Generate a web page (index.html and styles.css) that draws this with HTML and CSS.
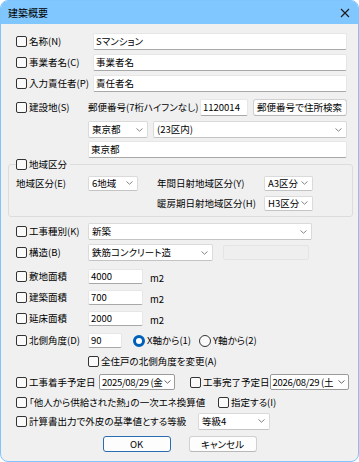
FILE: index.html
```html
<!DOCTYPE html>
<html lang="ja">
<head>
<meta charset="utf-8">
<link rel="stylesheet" href="styles.css">
</head>
<body>
<div class="win">
  <div class="titlebar">
    <span class="title">建築概要</span>
    <svg class="close" width="10" height="10" viewBox="0 0 10 10"><path d="M1 1L9 9M9 1L1 9" stroke="#1a1a1a" stroke-width="1.1"/></svg>
  </div>
  <div class="content">
    <div class="row">
      <label class="lbl w77"><span class="cb"></span>名称(N)</label>
      <div class="input grow">Sマンション</div>
    </div>
    <div class="row">
      <label class="lbl w77"><span class="cb"></span>事業者名(C)</label>
      <div class="input grow">事業者名</div>
    </div>
    <div class="row">
      <label class="lbl w77"><span class="cb"></span>入力責任者(P)</label>
      <div class="input grow">責任者名</div>
    </div>
    <div class="row h27">
      <label class="lbl w72"><span class="cb"></span>建設地(S)</label>
      <span class="zip-lbl">郵便番号(7桁ハイフンなし)</span>
      <div class="input zip">1120014</div>
      <div class="btn search">郵便番号で住所検索</div>
    </div>
    <div class="row h17">
      <span class="w72"></span>
      <div class="select pref"><span>東京都</span><svg class="chev" width="7" height="4" viewBox="0 0 7 4"><path d="M0.5 0.5L3.5 3.2L6.5 0.5" fill="none" stroke="#777" stroke-width="0.9"/></svg></div>
      <div class="select grow ml5"><span>(23区内)</span><svg class="chev" width="7" height="4" viewBox="0 0 7 4"><path d="M0.5 0.5L3.5 3.2L6.5 0.5" fill="none" stroke="#777" stroke-width="0.9"/></svg></div>
    </div>
    <div class="row h17 mt3">
      <span class="w72"></span>
      <div class="input grow">東京都</div>
    </div>

    <fieldset class="group">
      <legend class="lbl"><span class="cb"></span>地域区分</legend>
      <div class="grid">
        <span class="glbl">地域区分(E)</span>
        <div class="select s-area"><span>6地域</span><svg class="chev" width="7" height="4" viewBox="0 0 7 4"><path d="M0.5 0.5L3.5 3.2L6.5 0.5" fill="none" stroke="#777" stroke-width="0.9"/></svg></div>
        <span></span>
        <span class="glbl">年間日射地域区分(Y)</span>
        <div class="select s-zone"><span>A3区分</span><svg class="chev" width="7" height="4" viewBox="0 0 7 4"><path d="M0.5 0.5L3.5 3.2L6.5 0.5" fill="none" stroke="#777" stroke-width="0.9"/></svg></div>
        <span></span><span></span><span></span>
        <span class="glbl">暖房期日射地域区分(H)</span>
        <div class="select s-zone"><span>H3区分</span><svg class="chev" width="7" height="4" viewBox="0 0 7 4"><path d="M0.5 0.5L3.5 3.2L6.5 0.5" fill="none" stroke="#777" stroke-width="0.9"/></svg></div>
      </div>
    </fieldset>

    <div class="row mt4">
      <label class="lbl w72"><span class="cb"></span>工事種別(K)</label>
      <div class="select kind"><span>新築</span><svg class="chev" width="7" height="4" viewBox="0 0 7 4"><path d="M0.5 0.5L3.5 3.2L6.5 0.5" fill="none" stroke="#777" stroke-width="0.9"/></svg></div>
    </div>
    <div class="row">
      <label class="lbl w72"><span class="cb"></span>構造(B)</label>
      <div class="select struct"><span>鉄筋コンクリート造</span><svg class="chev" width="7" height="4" viewBox="0 0 7 4"><path d="M0.5 0.5L3.5 3.2L6.5 0.5" fill="none" stroke="#777" stroke-width="0.9"/></svg></div>
      <div class="disabled"></div>
    </div>
    <div class="row mt3">
      <label class="lbl w72"><span class="cb"></span>敷地面積</label>
      <div class="input area">4000</div><span class="unit">m2</span>
    </div>
    <div class="row">
      <label class="lbl w72"><span class="cb"></span>建築面積</label>
      <div class="input area">700</div><span class="unit">m2</span>
    </div>
    <div class="row">
      <label class="lbl w72"><span class="cb"></span>延床面積</label>
      <div class="input area">2000</div><span class="unit">m2</span>
    </div>
    <div class="row mt1">
      <label class="lbl w72"><span class="cb"></span>北側角度(D)</label>
      <div class="input angle">90</div>
      <label class="lbl radio-x"><span class="rb on"></span>X軸から(1)</label>
      <label class="lbl radio-y"><span class="rb"></span>Y軸から(2)</label>
    </div>
    <div class="row h20">
      <span class="w72"></span>
      <label class="lbl"><span class="cb"></span>全住戸の北側角度を変更(A)</label>
    </div>
    <div class="row h22">
      <label class="lbl w83"><span class="cb"></span>工事着手予定日</label>
      <div class="date d1"><span>2025/08/29 (金</span><svg class="chev" width="7" height="4" viewBox="0 0 7 4"><path d="M0.5 0.5L3.5 3.2L6.5 0.5" fill="none" stroke="#555" stroke-width="0.9"/></svg></div>
      <label class="lbl done"><span class="cb"></span>工事完了予定日</label>
      <div class="date d2"><span>2026/08/29 (土</span><svg class="chev" width="7" height="4" viewBox="0 0 7 4"><path d="M0.5 0.5L3.5 3.2L6.5 0.5" fill="none" stroke="#555" stroke-width="0.9"/></svg></div>
    </div>
    <div class="row h18">
      <label class="lbl heat"><span class="cb"></span>「他人から供給された熱」の一次エネ換算値</label>
      <label class="lbl"><span class="cb"></span>指定する(I)</label>
    </div>
    <div class="row h20">
      <label class="lbl grade-lbl"><span class="cb"></span>計算書出力で外皮の基準値とする等級</label>
      <div class="select grade"><span>等級4</span><svg class="chev" width="7" height="4" viewBox="0 0 7 4"><path d="M0.5 0.5L3.5 3.2L6.5 0.5" fill="none" stroke="#777" stroke-width="0.9"/></svg></div>
    </div>
    <div class="buttons">
      <div class="btn dlg default">OK</div>
      <div class="btn dlg">キャンセル</div>
    </div>
  </div>
</div>
</body>
</html>
```

FILE: styles.css
```css
* { box-sizing: border-box; }
html, body { margin: 0; padding: 0; background: #ffffff; }
body {
  font-family: "Noto Sans CJK JP", "Noto Sans", sans-serif;
  font-size: 9.5px;
  color: #000;
  font-feature-settings: "palt";
  line-height: 13px;
}
.win {
  width: 359px;
  height: 462px;
  border: 1px solid #7fc4ff;
  border-radius: 8px;
  background: #f0f0f0;
  overflow: hidden;
  display: flex;
  flex-direction: column;
}
.titlebar {
  height: 23px;
  flex: none;
  background: #80c6ff;
  display: flex;
  align-items: center;
  justify-content: space-between;
  padding: 0 8px 0 7px;
}
.title { font-size: 10px; }
.close { display: block; }
.content {
  padding: 7px 11px 0 15px;
  display: flex;
  flex-direction: column;
}
.row { display: flex; align-items: center; height: 21px; flex: none; }
.h27 { height: 27px; }
.h22 { height: 22px; }
.h20 { height: 20px; }
.h18 { height: 18px; }
.h17 { height: 17px; }
.mt1 { margin-top: 1px; }
.mt3 { margin-top: 3px; }
.mt4 { margin-top: 4px; }
.ml5 { margin-left: 5px; }
.lbl { display: flex; align-items: center; white-space: nowrap; }
.w72 { width: 72px; flex: none; }
.w77 { width: 77px; flex: none; }
.w83 { width: 83px; flex: none; }
.grow { flex: 1; }
.cb {
  width: 11px; height: 11px;
  border: 1px solid #333;
  border-radius: 2px;
  background: #fafafa;
  margin-right: 2px;
  flex: none;
}
.rb {
  width: 12px; height: 12px;
  border: 1px solid #333;
  border-radius: 50%;
  background: #fafafa;
  margin-right: 2px;
  flex: none;
}
.rb.on {
  border: 3.5px solid #005fb8;
  background: #fff;
}
.input {
  height: 17px;
  background: #fff;
  border: 1px solid #e6e6e6;
  border-bottom: 1px solid #a8a8a8;
  border-radius: 2px;
  padding: 0 2px;
  display: flex;
  align-items: center;
  white-space: nowrap;
}
.select {
  height: 17px;
  background: #fff;
  border: 1px solid #dadada;
  border-bottom-color: #c4c4c4;
  border-radius: 2px;
  padding: 0 4px 0 3px;
  display: flex;
  align-items: center;
  justify-content: space-between;
  white-space: nowrap;
}
.chev { flex: none; display: block; }
.zip-lbl { width: 112px; flex: none; white-space: nowrap; }
.zip { width: 48px; flex: none; }
.btn {
  background: #fdfdfd;
  border: 1px solid #d0d0d0;
  border-bottom-color: #b8b8b8;
  border-radius: 3px;
  display: flex;
  align-items: center;
  justify-content: center;
  white-space: nowrap;
}
.search { height: 17px; width: 94px; margin-left: 4.5px; flex: none; }
.pref { width: 60px; flex: none; }

.group {
  margin: 0 0 0 -8px;
  width: 345px;
  border: 1px solid #dcdcdc;
  border-radius: 3px;
  padding: 2px 0 3px 7px;
  min-width: 0;
}
.group legend { padding: 0 3px 0 0; margin-left: 0; line-height: 13px; }
.grid {
  display: grid;
  grid-template-columns: 72px 50px 19px 107px 49px;
  grid-auto-rows: 20px;
  align-items: center;
}
.glbl { white-space: nowrap; }
.s-area, .s-zone { height: 15px; }

.kind { width: 224px; flex: none; }
.struct { width: 125px; flex: none; }
.disabled {
  width: 86px; height: 15px; margin-left: 10px;
  border: 1px solid #e4e4e4;
  border-radius: 2px;
  background: #efefef;
}
.area { width: 55px; height: 15px; flex: none; }
.unit { margin-left: 7px; padding-top: 4px; }
.angle { width: 34px; height: 15px; flex: none; }
.radio-x { margin-left: 11px; }
.radio-y { margin-left: 8px; }
.date {
  height: 16px;
  background: #fff;
  border: 1px solid #9a9a9a;
  border-radius: 2px;
  padding: 0 3px 0 2px;
  display: flex;
  align-items: center;
  justify-content: space-between;
  white-space: nowrap;
}
.date span { letter-spacing: -0.3px; }
.d1 { width: 76px; flex: none; }
.done { margin-left: 15px; width: 83px; }
.d2 { width: 79px; flex: none; }
.heat { width: 202px; flex: none; }
.grade-lbl { width: 182px; flex: none; }
.grade { width: 72px; flex: none; }
.buttons {
  display: flex;
  justify-content: center;
  gap: 18px;
  margin: 5px 0 0 -4px;
}
.dlg { width: 68px; height: 16px; }
.default { border: 1px solid #2b6cb0; }
```
